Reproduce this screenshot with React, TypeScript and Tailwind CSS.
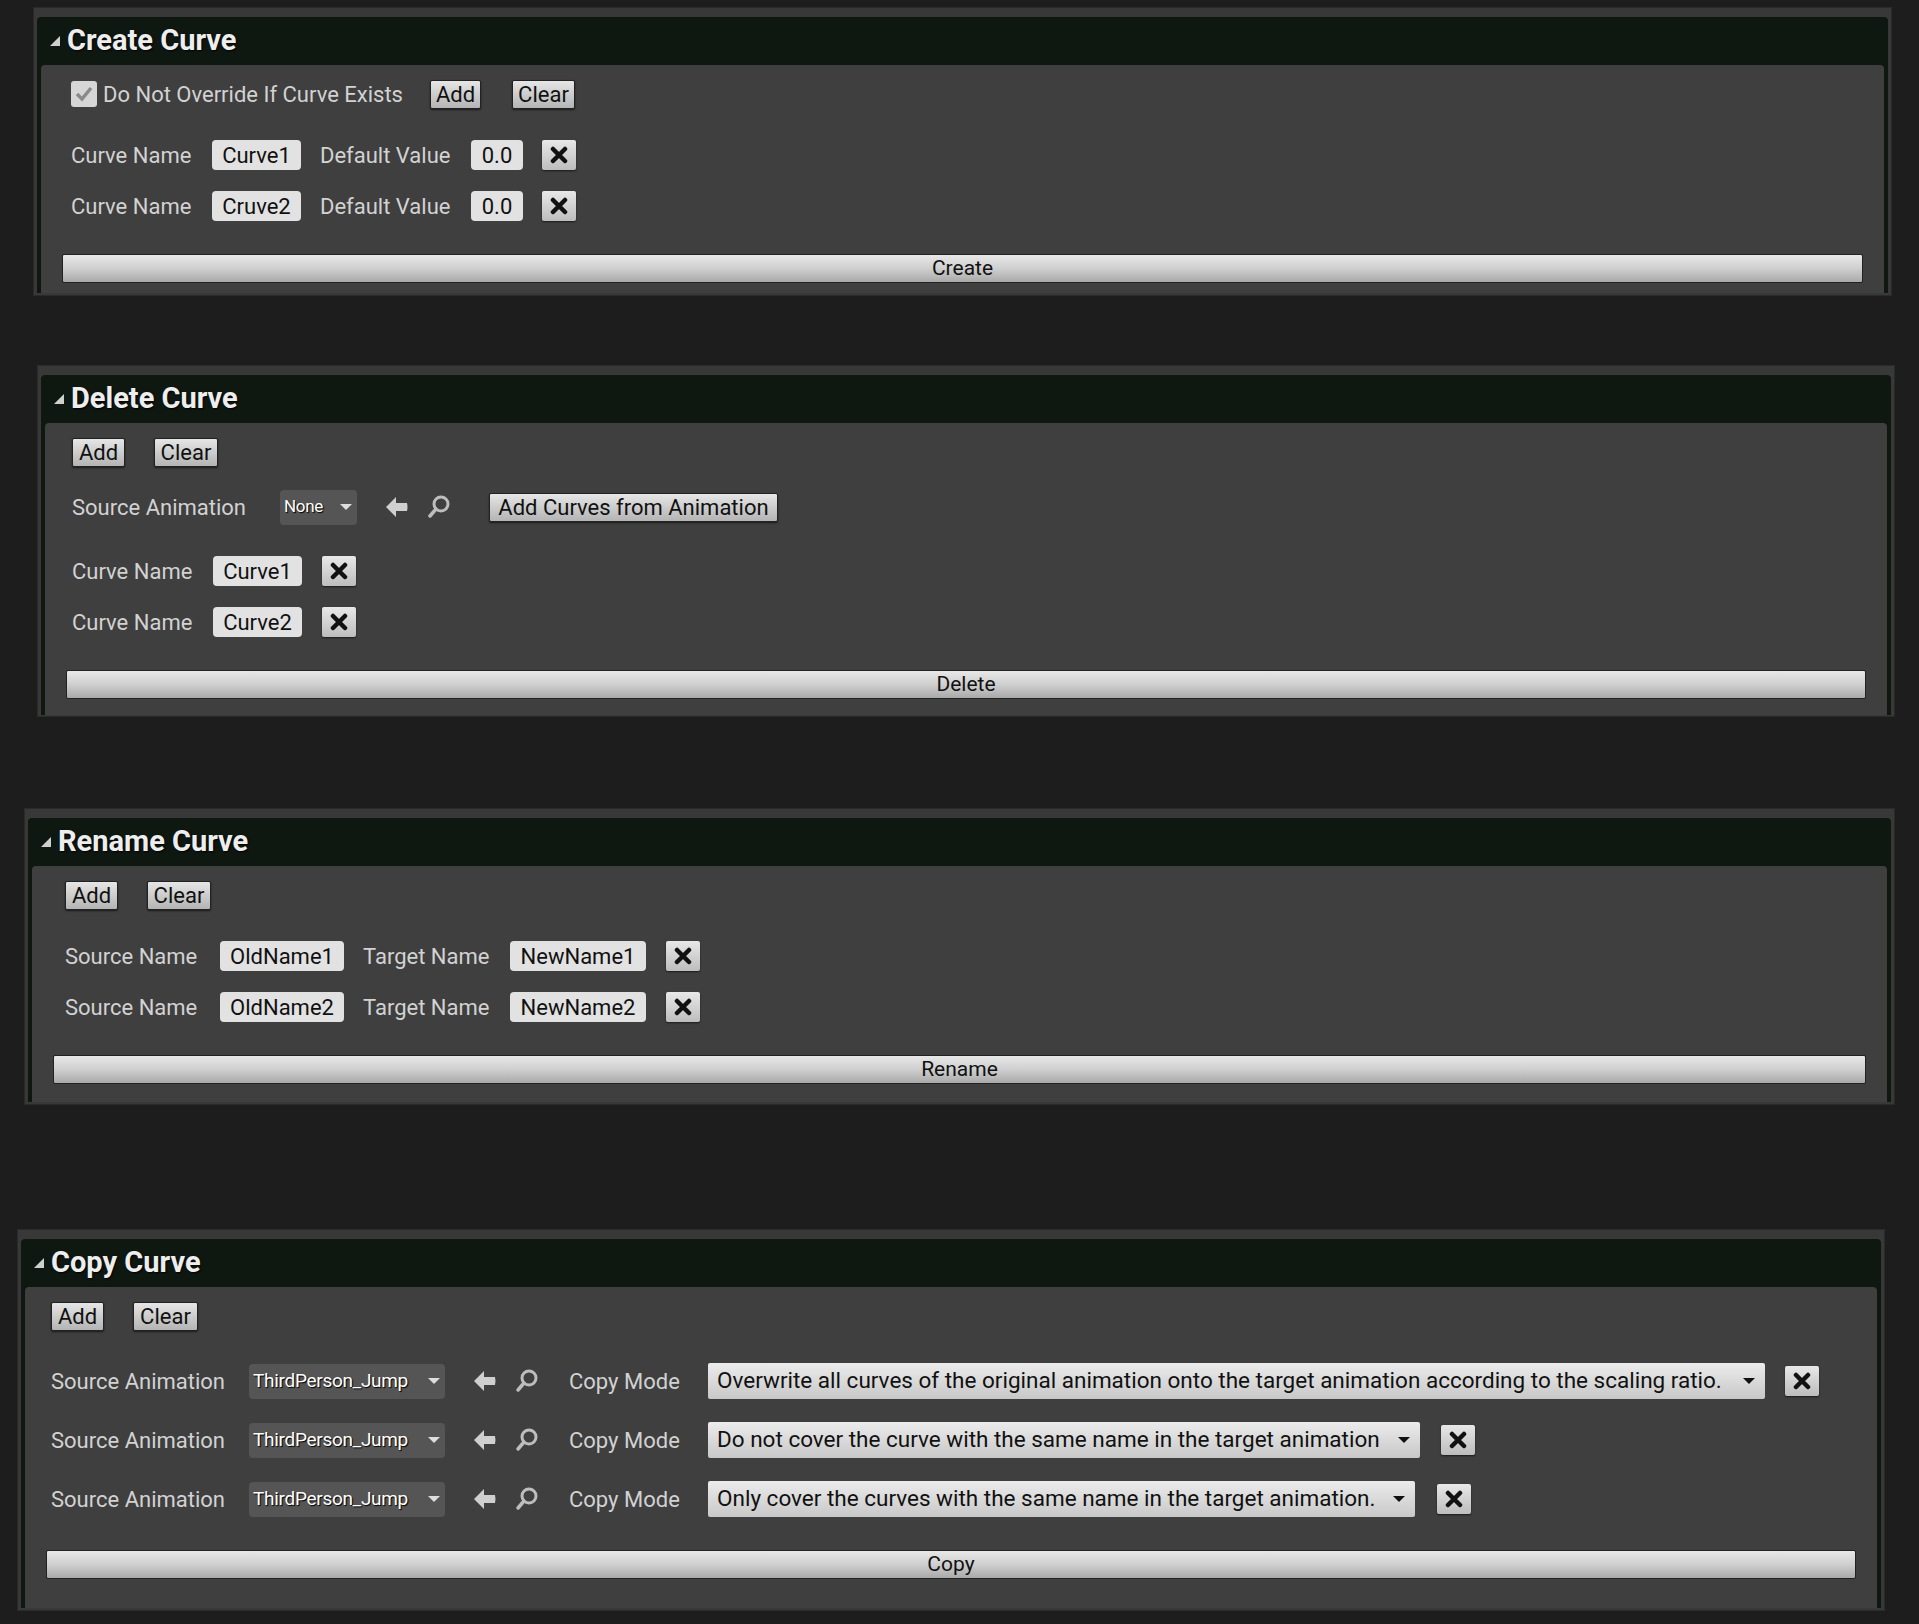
import React from "react";

const font = { fontFamily: "Roboto, 'Liberation Sans', sans-serif" };

function Btn({ children, w }: { children: React.ReactNode; w: string }) {
  return (
    <div className={`${w} h-[29px] flex items-center justify-center rounded-[2px] border border-[#222] bg-gradient-to-b from-[#e6e6e6] to-[#b4b4b4] text-[#111] text-[22px] shadow-[0_1px_2px_rgba(0,0,0,0.6)] whitespace-nowrap`}>
      {children}
    </div>
  );
}
function Inp({ children, w }: { children: React.ReactNode; w: string }) {
  return (
    <div className={`${w} h-[30px] flex items-center justify-center rounded-[4px] bg-[#e2e2e2] text-[#111] text-[22px]`}>
      {children}
    </div>
  );
}
function X() {
  return (
    <div className="w-[34px] h-[30px] flex items-center justify-center rounded-[2px] bg-gradient-to-b from-[#e8e8e8] to-[#bdbdbd] shadow-[0_1px_2px_rgba(0,0,0,0.6)] shrink-0">
      <svg width="18" height="18" viewBox="0 0 18 18"><path d="M3 3 L15 15 M15 3 L3 15" stroke="#111" strokeWidth="4.5" strokeLinecap="round" /></svg>
    </div>
  );
}
function Lbl({ children, w }: { children: React.ReactNode; w: string }) {
  return <div className={`${w} text-[22px] text-[#d2d2d2] shrink-0 whitespace-nowrap`}>{children}</div>;
}
function Drop({ children, w, small }: { children: React.ReactNode; w: string; small?: boolean }) {
  return (
    <div className={`${w} h-[35px] flex items-center justify-between px-[4px] rounded-[4px] bg-[#555] text-white ${small ? "text-[17px]" : "text-[19px]"} tracking-[-0.3px] [text-shadow:1px_1px_1px_#000] shrink-0`}>
      <span className="whitespace-nowrap">{children}</span>
      <svg width="14" height="8" viewBox="0 0 14 8"><path d="M1 1 L13 1 L7 7 Z" fill="#ddd" /></svg>
    </div>
  );
}
function ArrowSearch() {
  return (
    <div className="flex items-center gap-[18px] ml-[28px] shrink-0">
      <svg width="24" height="22" viewBox="0 0 24 22"><path d="M1 11 L11 1 L11 7 L22 7 Q23 11 22 15 L11 15 L11 21 Z" fill="#cfcfcf" /></svg>
      <svg width="24" height="24" viewBox="0 0 24 24"><circle cx="14" cy="9" r="7" stroke="#bdbdbd" strokeWidth="3" fill="none" /><path d="M9 14 L3 21" stroke="#bdbdbd" strokeWidth="3.5" strokeLinecap="round" /></svg>
    </div>
  );
}
function Sel({ children, w }: { children: React.ReactNode; w: string }) {
  return (
    <div className={`${w} h-[36px] flex items-center justify-between px-[9px] rounded-[2px] bg-gradient-to-b from-[#ececec] to-[#c8c8c8] text-[#111] text-[22.5px] shrink-0`}>
      <span className="whitespace-nowrap">{children}</span>
      <svg width="14" height="8" viewBox="0 0 14 8"><path d="M1 1 L13 1 L7 7 Z" fill="#111" /></svg>
    </div>
  );
}

function Section({ title, outer, pl, bottom, children, btn }: { title: string; outer: string; pl: string; bottom: string; children: React.ReactNode; btn: string }) {
  return (
    <div className={`${outer} bg-[#383838] border border-[#2a2a2a] pt-[9px] px-[3px] pb-[2px] flex flex-col`}>
      <div className="bg-[#0f1810] rounded-t-[4px] flex-1 flex flex-col">
        <div className="h-[48px] flex items-center pl-[12px] gap-[6px] shrink-0">
          <svg width="12" height="12" viewBox="0 0 12 12"><path d="M11 1 L11 11 L1 11 Z" fill="#cfcfcf" /></svg>
          <span className="text-[29px] font-bold text-[#eee] [text-shadow:1px_1px_2px_#000]">{title}</span>
        </div>
        <div className="mx-[4px] bg-[#3f3f3f] rounded-t-[4px] pt-[14px] flex-1 flex flex-col">
          <div className={`${pl} flex flex-col`}>{children}</div>
          <div className={`px-[21px] ${bottom}`}>
            <div className="h-[29px] flex items-center justify-center rounded-[2px] border border-[#222] bg-gradient-to-b from-[#e8e8e8] via-[#cfcfcf] to-[#a9a9a9] text-[#111] text-[21px]">{btn}</div>
          </div>
        </div>
      </div>
    </div>
  );
}

export default function App() {
  return (
    <div style={font} className="bg-[#1d1d1d] w-[1919px] h-[1624px] pt-[7px]">
      <Section title="Create Curve" outer="ml-[33px] w-[1859px] h-[289px]" pl="pl-[30px]" bottom="pb-[6px]" btn="Create">
        <div className="h-[30px] flex items-center">
          <div className="w-[26px] h-[26px] rounded-[3px] bg-[#d6d6d6] flex items-center justify-center">
            <svg width="18" height="16" viewBox="0 0 18 16"><path d="M2 8 L7 13 L16 2" stroke="#8a8a8a" strokeWidth="3.5" fill="none" /></svg>
          </div>
          <span className="ml-[6px] text-[22px] text-[#d2d2d2] w-[327px] whitespace-nowrap">Do Not Override If Curve Exists</span>
          <Btn w="w-[51px]">Add</Btn>
          <div className="w-[31px]" />
          <Btn w="w-[63px]">Clear</Btn>
        </div>
        {["Curve1", "Cruve2"].map((c, i) => (
          <div key={c} className={`h-[30px] flex items-center ${i === 0 ? "mt-[31px]" : "mt-[21px]"}`}>
            <Lbl w="w-[141px]">Curve Name</Lbl>
            <Inp w="w-[89px]">{c}</Inp>
            <Lbl w="w-[170px] pl-[19px]">Default Value</Lbl>
            <Inp w="w-[52px]">0.0</Inp>
            <div className="w-[19px]" />
            <X />
          </div>
        ))}
        <div className="h-[33px]" />
      </Section>

      <div className="h-[69px]" />
      <Section title="Delete Curve" outer="ml-[37px] w-[1858px] h-[352px]" pl="pl-[27px]" bottom="pb-[16px]" btn="Delete">
        <div className="h-[30px] flex items-center">
          <Btn w="w-[53px]">Add</Btn>
          <div className="w-[29px]" />
          <Btn w="w-[64px]">Clear</Btn>
        </div>
        <div className="h-[36px] flex items-center mt-[22px]">
          <Lbl w="w-[208px]">Source Animation</Lbl>
          <Drop w="w-[77px]" small>None</Drop>
          <ArrowSearch />
          <div className="w-[38px]" />
          <Btn w="w-[289px]">Add Curves from Animation</Btn>
        </div>
        {["Curve1", "Curve2"].map((c, i) => (
          <div key={c} className={`h-[30px] flex items-center ${i === 0 ? "mt-[31px]" : "mt-[21px]"}`}>
            <Lbl w="w-[141px]">Curve Name</Lbl>
            <Inp w="w-[89px]">{c}</Inp>
            <div className="w-[20px]" />
            <X />
          </div>
        ))}
        <div className="h-[33px]" />
      </Section>

      <div className="h-[91px]" />
      <Section title="Rename Curve" outer="ml-[24px] w-[1871px] h-[297px]" pl="pl-[33px]" bottom="pb-[12px]" btn="Rename">
        <div className="h-[30px] flex items-center">
          <Btn w="w-[53px]">Add</Btn>
          <div className="w-[29px]" />
          <Btn w="w-[64px]">Clear</Btn>
        </div>
        {[["OldName1", "NewName1"], ["OldName2", "NewName2"]].map(([a, b], i) => (
          <div key={a} className={`h-[30px] flex items-center ${i === 0 ? "mt-[31px]" : "mt-[21px]"}`}>
            <Lbl w="w-[155px]">Source Name</Lbl>
            <Inp w="w-[124px]">{a}</Inp>
            <Lbl w="w-[166px] pl-[19px]">Target Name</Lbl>
            <Inp w="w-[136px]">{b}</Inp>
            <div className="w-[20px]" />
            <X />
          </div>
        ))}
        <div className="h-[33px]" />
      </Section>

      <div className="h-[124px]" />
      <Section title="Copy Curve" outer="ml-[17px] w-[1868px] h-[382px]" pl="pl-[26px]" bottom="pb-[24px]" btn="Copy">
        <div className="h-[30px] flex items-center">
          <Btn w="w-[53px]">Add</Btn>
          <div className="w-[29px]" />
          <Btn w="w-[65px]">Clear</Btn>
        </div>
        {[
          ["Overwrite all curves of the original animation onto the target animation according to the scaling ratio.", "w-[1057px]", "w-[20px]"],
          ["Do not cover the curve with the same name in the target animation", "w-[712px]", "w-[21px]"],
          ["Only cover the curves with the same name in the target animation.", "w-[707px]", "w-[22px]"],
        ].map(([t, w, g], i) => (
          <div key={i} className={`h-[36px] flex items-center ${i === 0 ? "mt-[32px]" : "mt-[23px]"}`}>
            <Lbl w="w-[198px]">Source Animation</Lbl>
            <Drop w="w-[196px]">ThirdPerson_Jump</Drop>
            <ArrowSearch />
            <Lbl w="w-[169px] pl-[30px]">Copy Mode</Lbl>
            <Sel w={w}>{t}</Sel>
            <div className={g} />
            <X />
          </div>
        ))}
        <div className="h-[33px]" />
      </Section>
    </div>
  );
}
